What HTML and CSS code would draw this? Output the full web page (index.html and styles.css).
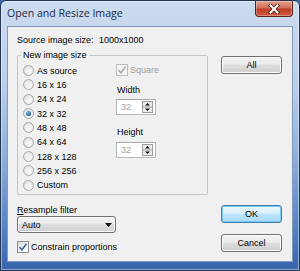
FILE: index.html
```html
<!DOCTYPE html>
<html lang="en">
<head>
  <meta charset="UTF-8">
  <title>Open and Resize Image</title>
  <link rel="stylesheet" href="styles.css">
</head>
<body>

  <div class="window">
    <!-- Title bar -->
    <div class="titlebar">
      <span class="title">Open and Resize Image</span>
      <div class="close-btn">
        <svg width="14" height="10" viewBox="0 0 14 10">
          <path d="M3.5 1.5 L10.5 8.5 M10.5 1.5 L3.5 8.5" stroke="#4a1c14" stroke-width="3.6" stroke-linecap="square"/>
          <path d="M3.5 1.5 L10.5 8.5 M10.5 1.5 L3.5 8.5" stroke="#ffffff" stroke-width="2" stroke-linecap="square"/>
        </svg>
      </div>
    </div>

    <!-- Client area -->
    <div class="client">
      <div class="source-row">
        <span class="source-label">Source image size:</span><span>1000x1000</span>
      </div>

      <div class="main">
        <div class="left-col">
          <fieldset class="group">
            <legend>New image size</legend>
            <div class="group-body">
              <div class="radio-list">
                <div class="radio-row"><span class="radio"></span>As source</div>
                <div class="radio-row"><span class="radio"></span>16 x 16</div>
                <div class="radio-row"><span class="radio"></span>24 x 24</div>
                <div class="radio-row"><span class="radio checked"></span>32 x 32</div>
                <div class="radio-row"><span class="radio"></span>48 x 48</div>
                <div class="radio-row"><span class="radio"></span>64 x 64</div>
                <div class="radio-row"><span class="radio"></span>128 x 128</div>
                <div class="radio-row"><span class="radio"></span>256 x 256</div>
                <div class="radio-row"><span class="radio"></span>Custom</div>
              </div>

              <div class="size-col">
                <div class="check-row disabled">
                  <span class="checkbox">
                    <svg width="10" height="10" viewBox="0 0 10 10"><path d="M1.5 5.2 L4 7.8 L8.5 1.8" fill="none" stroke="#a6a6a6" stroke-width="1.5"/></svg>
                  </span>Square
                </div>
                <div class="field-label width-label">Width</div>
                <div class="spin">
                  <span class="spin-value">32</span>
                  <svg class="spin-btn" width="11" height="12" viewBox="0 0 11 12">
                    <rect x="0.5" y="0.5" width="10" height="11" fill="#ececec" stroke="#9c9c9c"/>
                    <line x1="1" y1="6" x2="10" y2="6" stroke="#9c9c9c"/>
                    <path d="M3 4.5 H8 L5.5 2 Z" fill="#111"/>
                    <path d="M3 7.5 H8 L5.5 10 Z" fill="#111"/>
                  </svg>
                </div>
                <div class="field-label height-label">Height</div>
                <div class="spin">
                  <span class="spin-value">32</span>
                  <svg class="spin-btn" width="11" height="12" viewBox="0 0 11 12">
                    <rect x="0.5" y="0.5" width="10" height="11" fill="#ececec" stroke="#9c9c9c"/>
                    <line x1="1" y1="6" x2="10" y2="6" stroke="#9c9c9c"/>
                    <path d="M3 4.5 H8 L5.5 2 Z" fill="#111"/>
                    <path d="M3 7.5 H8 L5.5 10 Z" fill="#111"/>
                  </svg>
                </div>
              </div>
            </div>
          </fieldset>

          <div class="filter-label"><u>R</u>esample filter</div>
          <div class="combo">
            <span>Auto</span>
            <svg width="7" height="4" viewBox="0 0 7 4"><path d="M0 0 H7 L3.5 4 Z" fill="#111"/></svg>
          </div>

          <div class="check-row constrain">
            <span class="checkbox">
              <svg width="10" height="10" viewBox="0 0 10 10"><path d="M1.5 5.2 L4 7.8 L8.5 1.8" fill="none" stroke="#4b5e96" stroke-width="1.6"/></svg>
            </span>Constrain proportions
          </div>
        </div>

        <div class="button-col">
          <button class="btn btn-all">All</button>
          <button class="btn btn-ok">OK</button>
          <button class="btn btn-cancel">Cancel</button>
        </div>
      </div>
    </div>
  </div>

</body>
</html>
```

FILE: styles.css
```css
* {
  box-sizing: border-box;
}
body {
  margin: 0;
  padding: 0;
  font-family: "Liberation Sans", Arial, sans-serif;
  font-size: 9px;
  color: #000;
  background: #3a67ae;
}

/* Window frame */
.window {
  width: 300px;
  height: 271px;
  display: flex;
  flex-direction: column;
  border: 1px solid #23344d;
  border-radius: 6px 6px 0 0;
  padding: 0 6px 8px 6px;
  background: linear-gradient(180deg, #ccdcef 0%, #bcd0ea 30%, #8fafdc 58%, #5a86c7 82%, #3864ad 100%);
  box-shadow: inset 0 0 0 1px rgba(255, 255, 255, 0.45);
}

.titlebar {
  height: 25px;
  display: flex;
  align-items: flex-start;
  flex-shrink: 0;
}
.title {
  margin-top: 5px;
  font-family: "Open Sans", "Noto Sans", sans-serif;
  font-size: 10.6px;
  line-height: 14px;
  color: #1c2b3c;
}
.close-btn {
  margin-left: auto;
  width: 38px;
  height: 16px;
  display: flex;
  align-items: center;
  justify-content: center;
  border: 1px solid #5a2119;
  border-top: none;
  border-radius: 0 0 4px 4px;
  background: linear-gradient(180deg, #e3a090 0%, #d27058 45%, #bd3d26 55%, #cf5e43 100%);
  box-shadow: inset 0 0 0 1px rgba(255, 255, 255, 0.3);
}

/* Client area */
.client {
  flex: 1;
  background: #f0f0f0;
  border: 1px solid #8299bb;
  padding: 7px 0 0 9px;
}
.source-row {
  height: 12px;
  line-height: 12px;
}
.source-label {
  display: inline-block;
  width: 82px;
}

.main {
  display: flex;
  margin-top: 3px;
}
.left-col {
  width: 191px;
}

/* Group box */
.group {
  margin: 0;
  padding: 0 0 2px 0;
  min-width: 0;
  border: 1px solid #c6c6c6;
  border-radius: 2px;
}
.group legend {
  margin-left: 3px;
  padding: 0 2px;
  line-height: 12px;
}
.group-body {
  display: flex;
  padding: 2.5px 0 0 5px;
}
.radio-list {
  width: 93px;
}
.radio-row {
  height: 14.33px;
  display: flex;
  align-items: center;
  gap: 3px;
}
.radio {
  width: 11px;
  height: 11px;
  border-radius: 50%;
  border: 1px solid #a9a9a9;
  background: radial-gradient(circle at 60% 65%, #fbfbfb 0%, #e9e9e9 55%, #d6d6d6 100%);
  display: flex;
  align-items: center;
  justify-content: center;
  flex-shrink: 0;
}
.radio.checked::after {
  content: "";
  width: 5px;
  height: 5px;
  border-radius: 50%;
  background: radial-gradient(circle at 40% 35%, #8cc8ef 0%, #2a6fa8 55%, #0f3e6b 100%);
}

/* Size column */
.size-col {
  width: 60px;
}
.check-row {
  height: 12px;
  display: flex;
  align-items: center;
  gap: 2px;
}
.checkbox {
  width: 12px;
  height: 12px;
  border: 1px solid #8e8f8f;
  background: linear-gradient(135deg, #dadada 0%, #f4f4f4 60%, #ffffff 100%);
  display: flex;
  align-items: center;
  justify-content: center;
  flex-shrink: 0;
}
.check-row.disabled {
  color: #a0a0a0;
}
.check-row.disabled .checkbox {
  border-color: #bcbcbc;
  background: #f4f4f4;
}
.field-label {
  line-height: 12px;
  padding-left: 1px;
}
.width-label {
  margin-top: 8px;
}
.height-label {
  margin-top: 11px;
}
.spin {
  width: 40px;
  height: 16px;
  margin-top: 3.5px;
  display: flex;
  align-items: center;
  border: 1px solid #b5b7bd;
  border-top-color: #a6a8ad;
  background: #fff;
  padding-left: 4px;
}
.height-label + .spin {
  margin-top: 4px;
}
.spin-value {
  color: #a3a3a3;
}
.spin-btn {
  margin-left: auto;
  margin-right: 2px;
}

/* Resample filter */
.filter-label {
  margin-top: 10px;
  line-height: 11px;
}
.combo {
  width: 99px;
  height: 17px;
  display: flex;
  align-items: center;
  justify-content: space-between;
  padding: 0 3px 0 4px;
  border: 1px solid #707070;
  border-radius: 3px;
  background: linear-gradient(180deg, #f3f3f3 0%, #ebebeb 45%, #dddddd 50%, #d0d0d0 100%);
  box-shadow: inset 0 0 0 1px #fbfbfb;
}
.constrain {
  margin-top: 8px;
}

/* Buttons */
.button-col {
  width: 61px;
  margin-left: 13px;
  display: flex;
  flex-direction: column;
}
.btn {
  width: 61px;
  height: 18px;
  padding: 0;
  font-family: "Liberation Sans", Arial, sans-serif;
  font-size: 9px;
  color: #000;
  border: 1px solid #707070;
  border-radius: 3px;
  background: linear-gradient(180deg, #f2f2f2 0%, #ebebeb 45%, #dddddd 50%, #cfcfcf 100%);
  box-shadow: inset 0 0 0 1px #fcfcfc;
}
.btn-all {
  margin-top: 7px;
}
.btn-ok {
  margin-top: auto;
  border-color: #3c7fb1;
  background: linear-gradient(180deg, #eaf6fd 0%, #d9f0fc 45%, #bee6fd 50%, #a7d9f5 100%);
  box-shadow: inset 0 0 0 1px #7dc7f0;
}
.btn-cancel {
  margin-top: 11px;
  margin-bottom: 1px;
}
```
